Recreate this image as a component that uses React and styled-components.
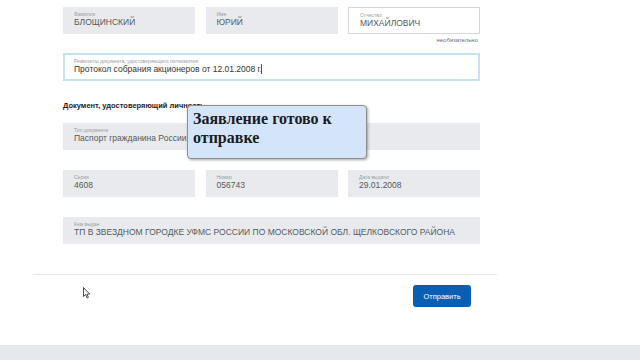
import React from 'react';
import styled, { createGlobalStyle } from 'styled-components';

const GlobalStyle = createGlobalStyle`
  html, body {
    margin: 0;
    padding: 0;
    background: #fff;
    font-family: "Liberation Sans", Arial, sans-serif;
  }
`;

const Page = styled.div`
  position: relative;
  width: 640px;
  height: 360px;
  overflow: hidden;
  display: flex;
  flex-direction: column;
`;

const Main = styled.div`
  flex: 1;
  display: flex;
  flex-direction: column;
`;

const Form = styled.div`
  width: 417px;
  margin-left: 63px;
  padding-top: 7px;
  display: flex;
  flex-direction: column;
`;

const Row = styled.div`
  display: grid;
  grid-template-columns: ${(p) => (p.$cols === 3 ? 'repeat(3, minmax(0, 1fr))' : 'minmax(0, 1fr)')};
  column-gap: 10.5px;
  margin-bottom: ${(p) => p.$mb || 0}px;
`;

const Field = styled.div`
  box-sizing: border-box;
  height: ${(p) => (p.$focused ? 28 : 27)}px;
  padding: ${(p) => (p.$focused ? '3px 9px' : '4px 11px')};
  background: ${(p) => (p.$variant === 'gray' ? '#e8eaed' : '#fff')};
  border: ${(p) =>
    p.$focused ? '2px solid #c6e1f2' : p.$variant === 'gray' ? 'none' : '1px solid #d3d7dc'};
  display: flex;
  flex-direction: column;
  overflow: hidden;
`;

const Label = styled.div`
  font-size: 5px;
  line-height: 6px;
  color: #9a9ea4;
  white-space: nowrap;
`;

const Value = styled.div`
  font-size: 8.5px;
  line-height: 11px;
  color: ${(p) => (p.$dark ? '#333' : '#555a60')};
  white-space: nowrap;
`;

const Caret = styled.span`
  display: inline-block;
  width: 1px;
  height: 10px;
  background: #555;
  vertical-align: -2px;
  margin-left: -1px;
`;

const Hint = styled.div`
  text-align: right;
  font-size: 6px;
  line-height: 8px;
  color: #6b6f74;
  padding: 2px 2px 9px 0;
`;

const Heading = styled.div`
  font-size: 7.5px;
  font-weight: bold;
  color: #222;
  line-height: 10px;
  margin: 0 0 12px;
`;

const Footer = styled.div`
  margin: 30px 0 0 33px;
  width: 464px;
  border-top: 1px solid #e6e8eb;
  display: flex;
  justify-content: flex-end;
  padding: 10px 26px 0 0;
  box-sizing: border-box;
`;

const Button = styled.button`
  width: 58px;
  height: 22px;
  border: none;
  border-radius: 3px;
  background: #0a5fb4;
  color: #fff;
  font-family: "Liberation Sans", Arial, sans-serif;
  font-size: 7.5px;
  padding: 0;
`;

const BottomBand = styled.div`
  height: 15px;
  background: #e5e8ec;
`;

const Tooltip = styled.div`
  position: absolute;
  left: 187px;
  top: 105px;
  width: 180px;
  height: 54px;
  box-sizing: border-box;
  padding: 3px 5px;
  background: #d4e5fa;
  border: 1px solid #8e8e8e;
  border-radius: 4px;
  box-shadow: 1px 1px 3px rgba(0, 0, 0, 0.35);
  font-family: "Liberation Serif", "Times New Roman", serif;
  font-weight: bold;
  font-size: 16px;
  line-height: 19px;
  color: #1b1b24;
`;

const Cursor = styled.svg`
  position: absolute;
  left: 83px;
  top: 287px;
`;

const InfoField = ({ label, value, variant = 'gray', focused, caret }) => (
  <Field $variant={variant} $focused={focused}>
    <Label>{label}</Label>
    <Value $dark={focused}>
      {value}
      {caret && <Caret />}
    </Value>
  </Field>
);

const App = () => {
  return (
    <Page>
      <GlobalStyle />
      <Main>
        <Form>
          <Row $cols={3}>
            <InfoField label="Фамилия" value="БЛОЩИНСКИЙ" />
            <InfoField label="Имя" value="ЮРИЙ" />
            <InfoField label="Отчество" value="МИХАЙЛОВИЧ" variant="white" />
          </Row>
          <Hint>необязательно</Hint>
          <Row $mb={20}>
            <InfoField
              label="Реквизиты документа, удостоверяющего полномочия"
              value="Протокол собрания акционеров от 12.01.2008 г."
              variant="white"
              focused
              caret
            />
          </Row>
          <Heading>Документ, удостоверяющий личность</Heading>
          <Row $mb={20}>
            <InfoField label="Тип документа" value="Паспорт гражданина России" />
          </Row>
          <Row $cols={3} $mb={20}>
            <InfoField label="Серия" value="4608" />
            <InfoField label="Номер" value="056743" />
            <InfoField label="Дата выдачи" value="29.01.2008" />
          </Row>
          <Row>
            <InfoField
              label="Кем выдан"
              value="ТП В ЗВЕЗДНОМ ГОРОДКЕ УФМС РОССИИ ПО  МОСКОВСКОЙ ОБЛ. ЩЕЛКОВСКОГО РАЙОНА"
            />
          </Row>
        </Form>
        <Footer>
          <Button>Отправить</Button>
        </Footer>
      </Main>
      <BottomBand />
      <Tooltip>Заявление готово к отправке</Tooltip>
      <Cursor width="8" height="12" viewBox="0 0 8 12">
        <path d="M0.5 0.5 L0.5 9.5 L2.6 7.6 L4.1 11 L5.4 10.4 L3.9 7.1 L6.8 7.1 Z" fill="#fff" stroke="#222" strokeWidth="0.8" />
      </Cursor>
    </Page>
  );
};

export default App;
